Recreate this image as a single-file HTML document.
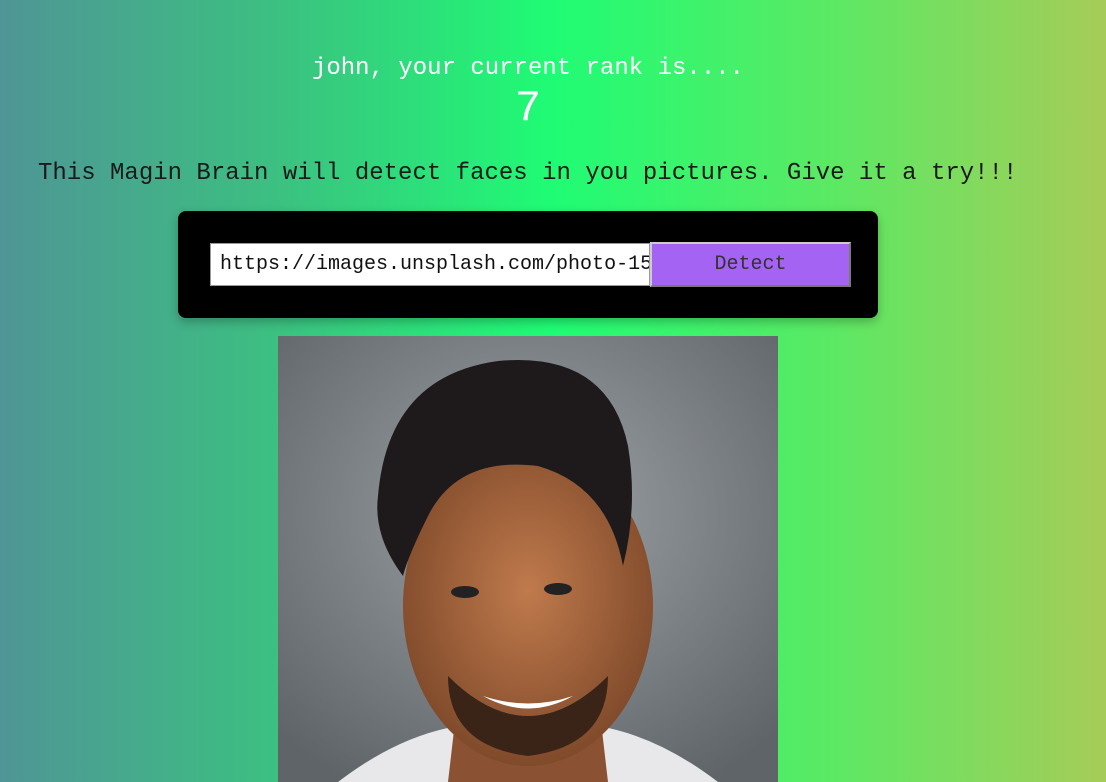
<!DOCTYPE html>
<html><head><style>
body{margin:0;width:1106px;height:782px;overflow:hidden;background:linear-gradient(90deg,#4f9596 0%,#3cc081 25%,#1ffc74 50%,#5be964 75%,#a6cc58 100%);font-family:"Liberation Mono",monospace;position:relative}
.t{position:absolute;left:0;width:1056px;text-align:center;white-space:nowrap}
</style></head><body>
<div class="t" style="top:54px;font-size:24px;color:#fff;line-height:30px">john, your current rank is....</div>
<div class="t" style="top:84px;font-size:44px;color:#fff;line-height:50px">7</div>
<div style="position:absolute;left:38px;top:159px;font-size:24px;line-height:30px;color:#1a1a1a;white-space:nowrap">This Magin Brain will detect faces in you pictures. Give it a try!!!</div>
<div style="position:absolute;left:178px;top:211px;width:700px;height:107px;background:#000;border-radius:8px;box-shadow:0 4px 10px rgba(0,0,0,.25)"></div>
<div style="position:absolute;left:210px;top:243px;width:440px;height:43px;background:#fff;border:1px solid #999;box-sizing:border-box;overflow:hidden;font-size:20px;line-height:41px;padding-left:9px;white-space:nowrap;color:#111">https://images.unsplash.com/photo-1500</div>
<div style="position:absolute;left:650px;top:242px;width:201px;height:45px;background:#a463f2;border:2px outset #ccc;box-sizing:border-box;font-size:20px;line-height:41px;text-align:center;color:#333">Detect</div>
<svg style="position:absolute;left:278px;top:336px" width="500" height="446" viewBox="0 0 500 446">
<defs><radialGradient id="bg" cx="50%" cy="40%" r="70%"><stop offset="0" stop-color="#9ea3a8"/><stop offset="1" stop-color="#5f6468"/></radialGradient>
<radialGradient id="sk" cx="50%" cy="45%" r="60%"><stop offset="0" stop-color="#c07a4c"/><stop offset="1" stop-color="#7a4628"/></radialGradient></defs>
<rect width="500" height="446" fill="url(#bg)"/>
<path d="M60 446 Q120 400 180 390 L320 390 Q380 400 440 446Z" fill="#e8e8ea"/>
<path d="M180 360 L320 360 L330 446 L170 446Z" fill="#8a5232"/>
<ellipse cx="250" cy="270" rx="125" ry="160" fill="url(#sk)"/>
<path d="M100 160 Q110 40 220 25 Q330 15 350 110 Q360 170 345 230 Q330 150 260 130 Q180 120 150 180 Q130 220 125 240 Q95 200 100 160Z" fill="#1e1a1c"/>
<path d="M170 340 Q250 420 330 340 Q330 410 250 420 Q170 410 170 340Z" fill="#3a2418"/>
<path d="M205 360 Q250 385 295 360 Q250 375 205 360Z" fill="#fff"/>
<ellipse cx="187" cy="256" rx="14" ry="6" fill="#222"/><ellipse cx="280" cy="253" rx="14" ry="6" fill="#222"/>
</svg>
</body></html>
